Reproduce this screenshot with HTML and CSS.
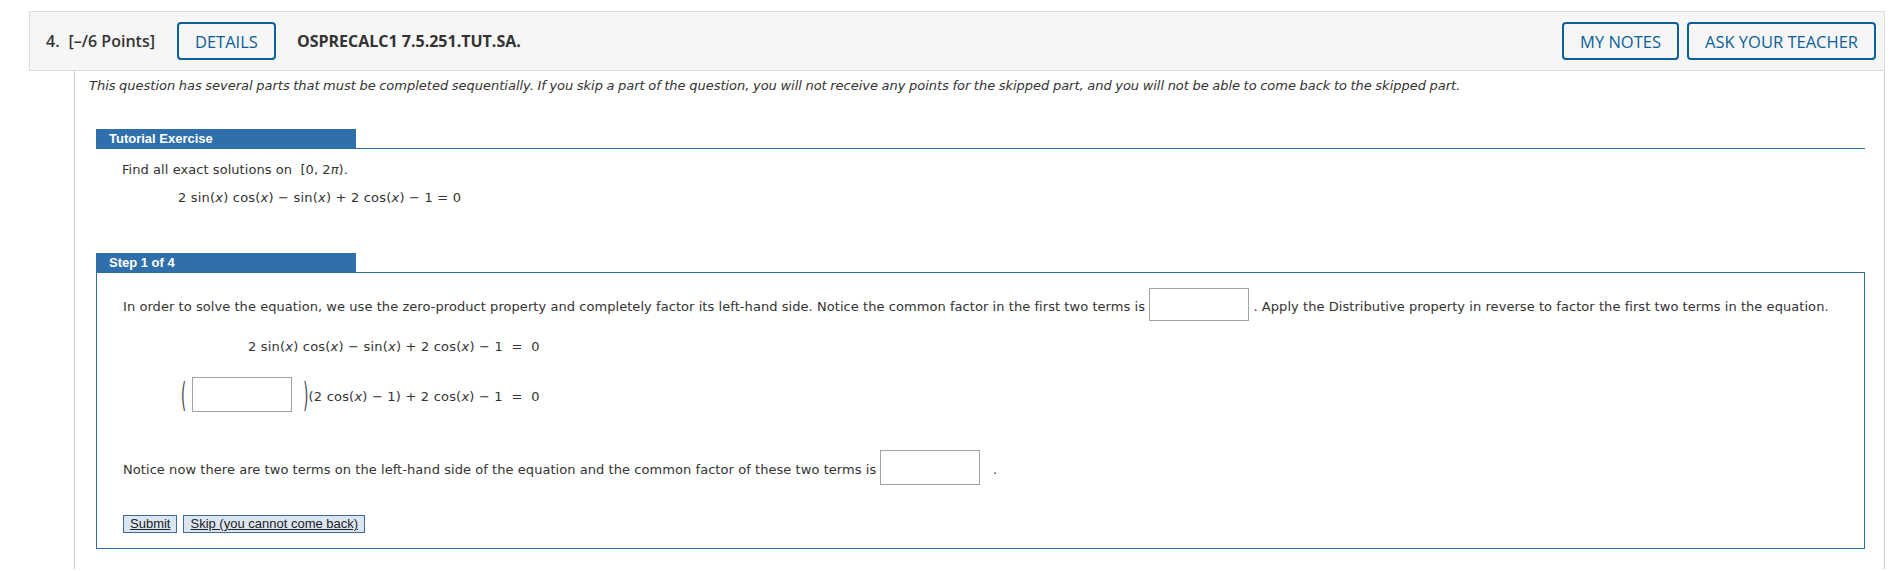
FILE: index.html
```html
<!DOCTYPE html>
<html lang="en">
<head>
    <meta charset="UTF-8">
    <meta name="viewport" content="width=device-width, initial-scale=1.0">
    <title>Question 4</title>
    <link rel="stylesheet" href="styles.css">
</head>
<body>
    <div class="question">
        <div class="q-header">
            <span class="q-num">4.</span>
            <span class="q-points">[&ndash;/6 Points]</span>
            <button class="hdr-btn details-btn">DETAILS</button>
            <span class="q-code">OSPRECALC1 7.5.251.TUT.SA.</span>
            <div class="hdr-right">
                <button class="hdr-btn">MY NOTES</button>
                <button class="hdr-btn">ASK YOUR TEACHER</button>
            </div>
        </div>

        <div class="q-body">
            <p class="notice">This question has several parts that must be completed sequentially. If you skip a part of the question, you will not receive any points for the skipped part, and you will not be able to come back to the skipped part.</p>

            <div class="tutorial">
                <div class="section-head"><span class="section-title">Tutorial Exercise</span></div>
                <p class="tut-text">Find all exact solutions on &nbsp;[0, 2<i>&pi;</i>).</p>
                <p class="tut-eq math">2 sin(<i>x</i>) cos(<i>x</i>) &minus; sin(<i>x</i>) + 2 cos(<i>x</i>) &minus; 1 = 0</p>
            </div>

            <div class="step">
                <div class="step-title">Step 1 of 4</div>
                <div class="step-box">
                    <p class="step-text">In order to solve the equation, we use the zero-product property and completely factor its left-hand side. Notice the common factor in the first two terms is <input type="text" class="answer first"> . Apply the Distributive property in reverse to factor the first two terms in the equation.</p>

                    <p class="step-eq math">2 sin(<i>x</i>) cos(<i>x</i>) &minus; sin(<i>x</i>) + 2 cos(<i>x</i>) &minus; 1 &nbsp;= &nbsp;0</p>

                    <p class="paren-row math"><span class="paren open">(</span><input type="text" class="answer"><span class="paren close">)</span>(2 cos(<i>x</i>) &minus; 1) + 2 cos(<i>x</i>) &minus; 1 &nbsp;= &nbsp;0</p>

                    <p class="step-text second">Notice now there are two terms on the left-hand side of the equation and the common factor of these two terms is <input type="text" class="answer"> &nbsp;&nbsp;.</p>

                    <div class="step-actions">
                        <button class="step-btn">Submit</button>
                        <button class="step-btn">Skip (you cannot come back)</button>
                    </div>
                </div>
            </div>
        </div>
    </div>
</body>
</html>
```

FILE: styles.css
```css
html {
    overflow: hidden;
}
body {
    margin: 0;
    font-family: "DejaVu Sans", Verdana, sans-serif;
    font-size: 13px;
    letter-spacing: 0.06px;
    color: #333;
    background-color: #fff;
}
p {
    margin: 0;
    line-height: 16px;
}
.question {
    margin: 11px 16px 0 29px;
}

/* header bar */
.q-header {
    height: 58px;
    display: flex;
    align-items: center;
    padding: 0 8px 0 16px;
    background-color: #f6f6f6;
    border: 1px solid #ddd;
    font-family: "Open Sans", sans-serif;
    font-size: 16px;
    letter-spacing: 0;
    color: #333;
}
.q-num {
    font-weight: 600;
    margin-right: 9px;
}
.q-points {
    font-weight: 600;
}
.q-code {
    font-weight: 700;
}
.hdr-btn {
    height: 38px;
    padding: 0 16px;
    background-color: transparent;
    border: 2px solid #0b5f99;
    border-radius: 4px;
    color: #0b5f99;
    font-family: "Open Sans", sans-serif;
    font-size: 16.5px;
    cursor: pointer;
}
.details-btn {
    margin: 0 21px 0 22px;
}
.hdr-right {
    margin-left: auto;
    display: flex;
    gap: 8px;
}

/* body */
.q-body {
    margin-left: 45px;
    padding: 7px 19px 20px 14px;
    border-left: 1px solid #ccc;
    border-right: 1px solid #ccc;
}
.notice {
    font-style: italic;
    letter-spacing: 0;
    word-spacing: -0.6px;
}
.math {
    letter-spacing: 0.2px;
}
.tutorial {
    margin: 35px 0 0 7px;
}
.section-head {
    height: 19px;
    border-bottom: 1px solid #2f6fab;
}
.section-title,
.step-title {
    display: block;
    width: 247px;
    height: 19px;
    padding-left: 13px;
    background-color: #2f6fab;
    color: #fff;
    font-family: "Liberation Sans", Arial, sans-serif;
    font-weight: bold;
    font-size: 13px;
    letter-spacing: 0;
    line-height: 19px;
}
.tut-text {
    margin: 13px 0 0 26px;
}
.tut-eq {
    margin: 12px 0 0 82px;
}
.step {
    margin: 47px 0 0 7px;
}
.step-box {
    border: 1px solid #2f6fab;
    padding: 15px 26px 15px 26px;
}
.answer {
    box-sizing: border-box;
    width: 100px;
    height: 35px;
    margin: 0 0 5px 0;
    border: 1px solid #a3a3a3;
    vertical-align: middle;
    padding: 0;
}
.answer.first {
    height: 33px;
}
.step-eq {
    margin: 13px 0 0 125px;
}
.paren-row {
    margin: 22px 0 0 58px;
}
.paren {
    display: inline-block;
    transform: scaleY(2.6);
    color: #444;
}
.paren.open {
    margin-right: 6px;
}
.paren.close {
    margin-left: 11px;
}
.step-text.second {
    margin-top: 33px;
}
.step-actions {
    display: flex;
    gap: 6px;
    margin-top: 25px;
}
.step-btn {
    height: 18px;
    padding: 0 6px;
    background-color: #dce6f2;
    border: 1px solid #416b9b;
    color: #222;
    font-family: "Liberation Sans", Arial, sans-serif;
    font-size: 13px;
    letter-spacing: 0;
    text-decoration: underline;
    line-height: 16px;
    cursor: pointer;
}
```
